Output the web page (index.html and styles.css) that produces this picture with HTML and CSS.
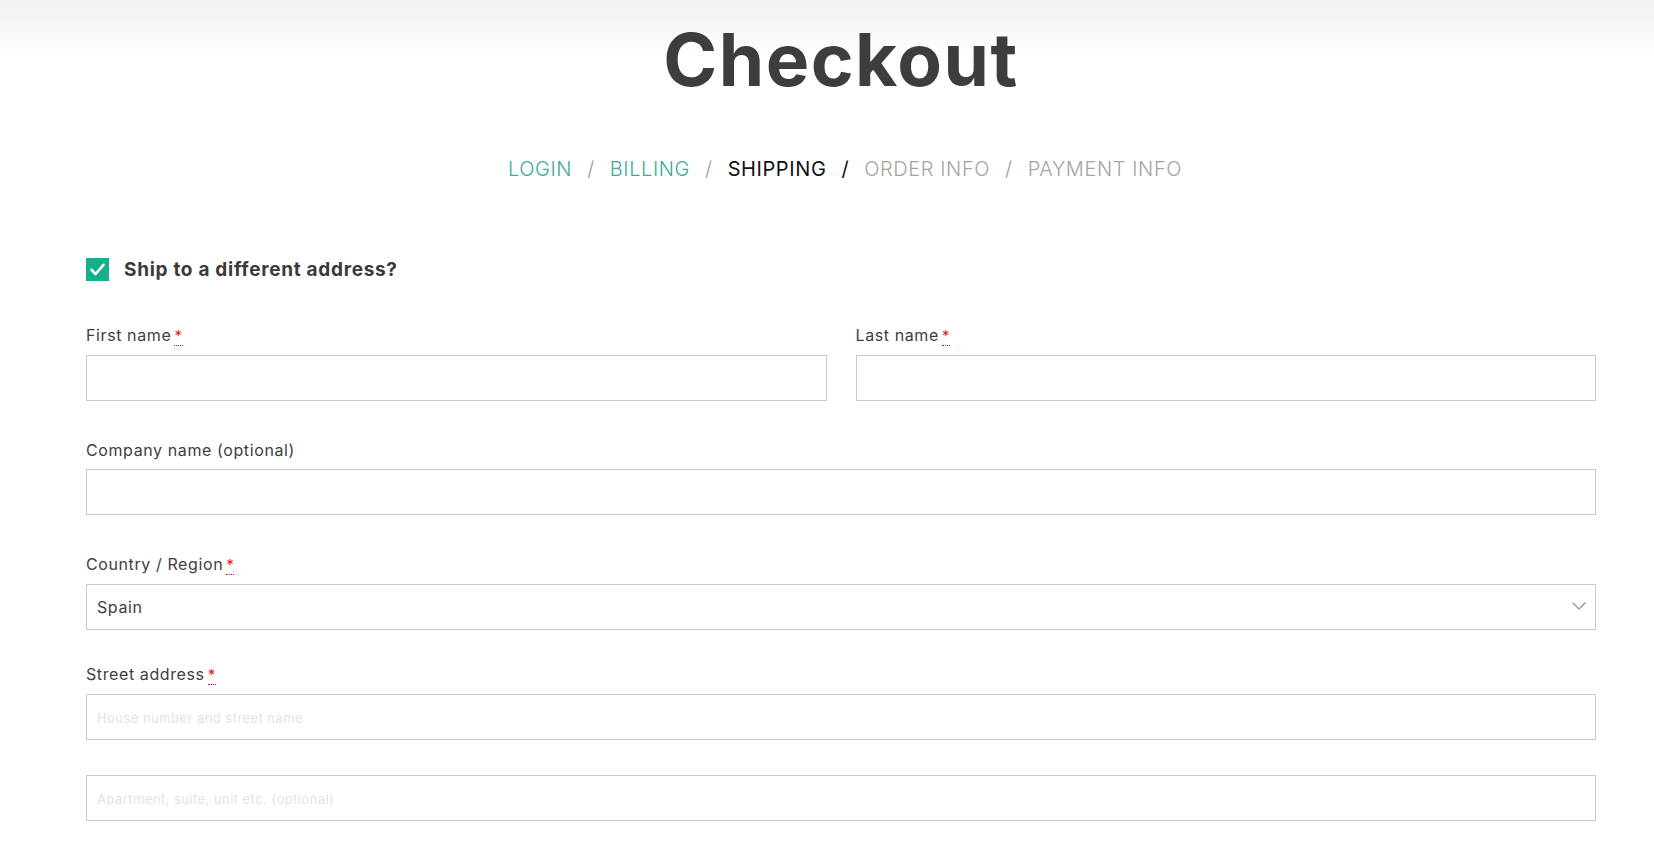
FILE: index.html
```html
<!DOCTYPE html>
<html lang="en">
<head>
<meta charset="utf-8">
<title>Checkout</title>
<link rel="stylesheet" href="styles.css">
</head>
<body>
<div class="page">
  <header class="hero">
    <h1 class="title">Checkout</h1>
    <nav class="steps">
      <span class="step done">LOGIN</span>
      <span class="sep">/</span>
      <span class="step done">BILLING</span>
      <span class="sep">/</span>
      <span class="step current">SHIPPING</span>
      <span class="sep dark">/</span>
      <span class="step todo">ORDER INFO</span>
      <span class="sep">/</span>
      <span class="step todo">PAYMENT INFO</span>
    </nav>
  </header>

  <main class="content">
    <label class="ship-toggle">
      <span class="checkbox">
        <svg viewBox="0 0 23 23" width="23" height="23"><path d="M5.5 11.8 L9.6 16 L17.5 6.8" fill="none" stroke="#fff" stroke-width="2.6" stroke-linecap="round" stroke-linejoin="round"/></svg>
      </span>
      <span class="ship-text">Ship to a different address?</span>
    </label>

    <div class="row-2">
      <div class="field">
        <label class="label">First name <abbr class="req" title="required">*</abbr></label>
        <input class="input" type="text">
      </div>
      <div class="field">
        <label class="label">Last name <abbr class="req" title="required">*</abbr></label>
        <input class="input" type="text">
      </div>
    </div>

    <div class="field">
      <label class="label">Company name (optional)</label>
      <input class="input" type="text">
    </div>

    <div class="field field-select">
      <label class="label">Country / Region <abbr class="req" title="required">*</abbr></label>
      <div class="select">
        <span class="select-value">Spain</span>
        <svg class="chevron" viewBox="0 0 14 8" width="14" height="8"><polyline points="0.5,0.5 7,7 13.5,0.5" fill="none" stroke="#8a8a8a" stroke-width="1.1"/></svg>
      </div>
    </div>

    <div class="field field-street">
      <label class="label">Street address <abbr class="req" title="required">*</abbr></label>
      <input class="input" type="text" placeholder="House number and street name">
    </div>

    <div class="field">
      <input class="input" type="text" placeholder="Apartment, suite, unit etc. (optional)">
    </div>
  </main>
</div>
</body>
</html>
```

FILE: styles.css
```css
* { box-sizing: border-box; }

html, body {
  margin: 0;
  padding: 0;
  background: #ffffff;
}

body {
  font-family: Inter, "Open Sans", "Liberation Sans", sans-serif;
  color: #404040;
}

.page {
  background: linear-gradient(to bottom, #f1f1f1 0px, #fdfdfd 50px, #ffffff 60px);
  min-height: 846px;
  padding: 0 58px 0 86px;
}

.hero {
  display: flex;
  flex-direction: column;
  align-items: center;
  padding-top: 23px;
}

.title {
  margin: 0;
  font-size: 73px;
  line-height: 73px;
  font-weight: 700;
  color: #3d3d3d;
  letter-spacing: 1.5px;
}

.steps {
  margin-top: 61px;
  display: flex;
  align-items: baseline;
  gap: 15px;
  font-size: 20px;
  line-height: 24px;
  letter-spacing: 0.6px;
  padding-left: 8px;
}

.step { font-weight: 300; }
.step.done { color: #3ea99c; }
.step.current { color: #111111; font-weight: 400; }
.step.todo { color: #a3a3a3; }

.sep {
  color: #9a9a9a;
  font-weight: 300;
}
.sep.dark { color: #111111; font-weight: 400; }

.content {
  padding-top: 77px;
}

.ship-toggle {
  display: flex;
  align-items: center;
  gap: 15px;
  height: 23px;
  margin-bottom: 41px;
}

.checkbox {
  width: 23px;
  height: 23px;
  background: #15af8b;
  display: flex;
}

.ship-text {
  font-size: 19px;
  font-weight: 700;
  color: #3a3a3a;
  letter-spacing: 0.7px;
}

.row-2 {
  display: grid;
  grid-template-columns: 1fr 1fr;
  column-gap: 29px;
}

.field {
  display: flex;
  flex-direction: column;
  margin-bottom: 36px;
}

.field-select { margin-bottom: 31px; }
.field-street { margin-bottom: 35px; }

.label {
  font-size: 16px;
  line-height: 24px;
  padding-top: 1px;
  margin-bottom: 7px;
  color: #404040;
  letter-spacing: 0.6px;
}

.req {
  color: #e8141b;
  text-decoration: none;
  border-bottom: 1px dotted #e8141b;
  font-size: 15px;
  margin-left: -2px;
  cursor: help;
}

.input, .select {
  height: 46px;
  border: 1px solid #cbcbcb;
  background: #ffffff;
  width: 100%;
  font-family: inherit;
  font-size: 16px;
  color: #404040;
  padding: 0 10px;
  border-radius: 0;
  outline: none;
}

.input::placeholder {
  color: #e3e3e3;
  font-size: 13px;
  letter-spacing: 0.45px;
}

.select {
  display: flex;
  align-items: center;
  justify-content: space-between;
  padding: 0 9px 0 10px;
}

.select-value {
  font-size: 16px;
  color: #404040;
  letter-spacing: 0.6px;
}

.chevron { margin-top: -2px; }
```
